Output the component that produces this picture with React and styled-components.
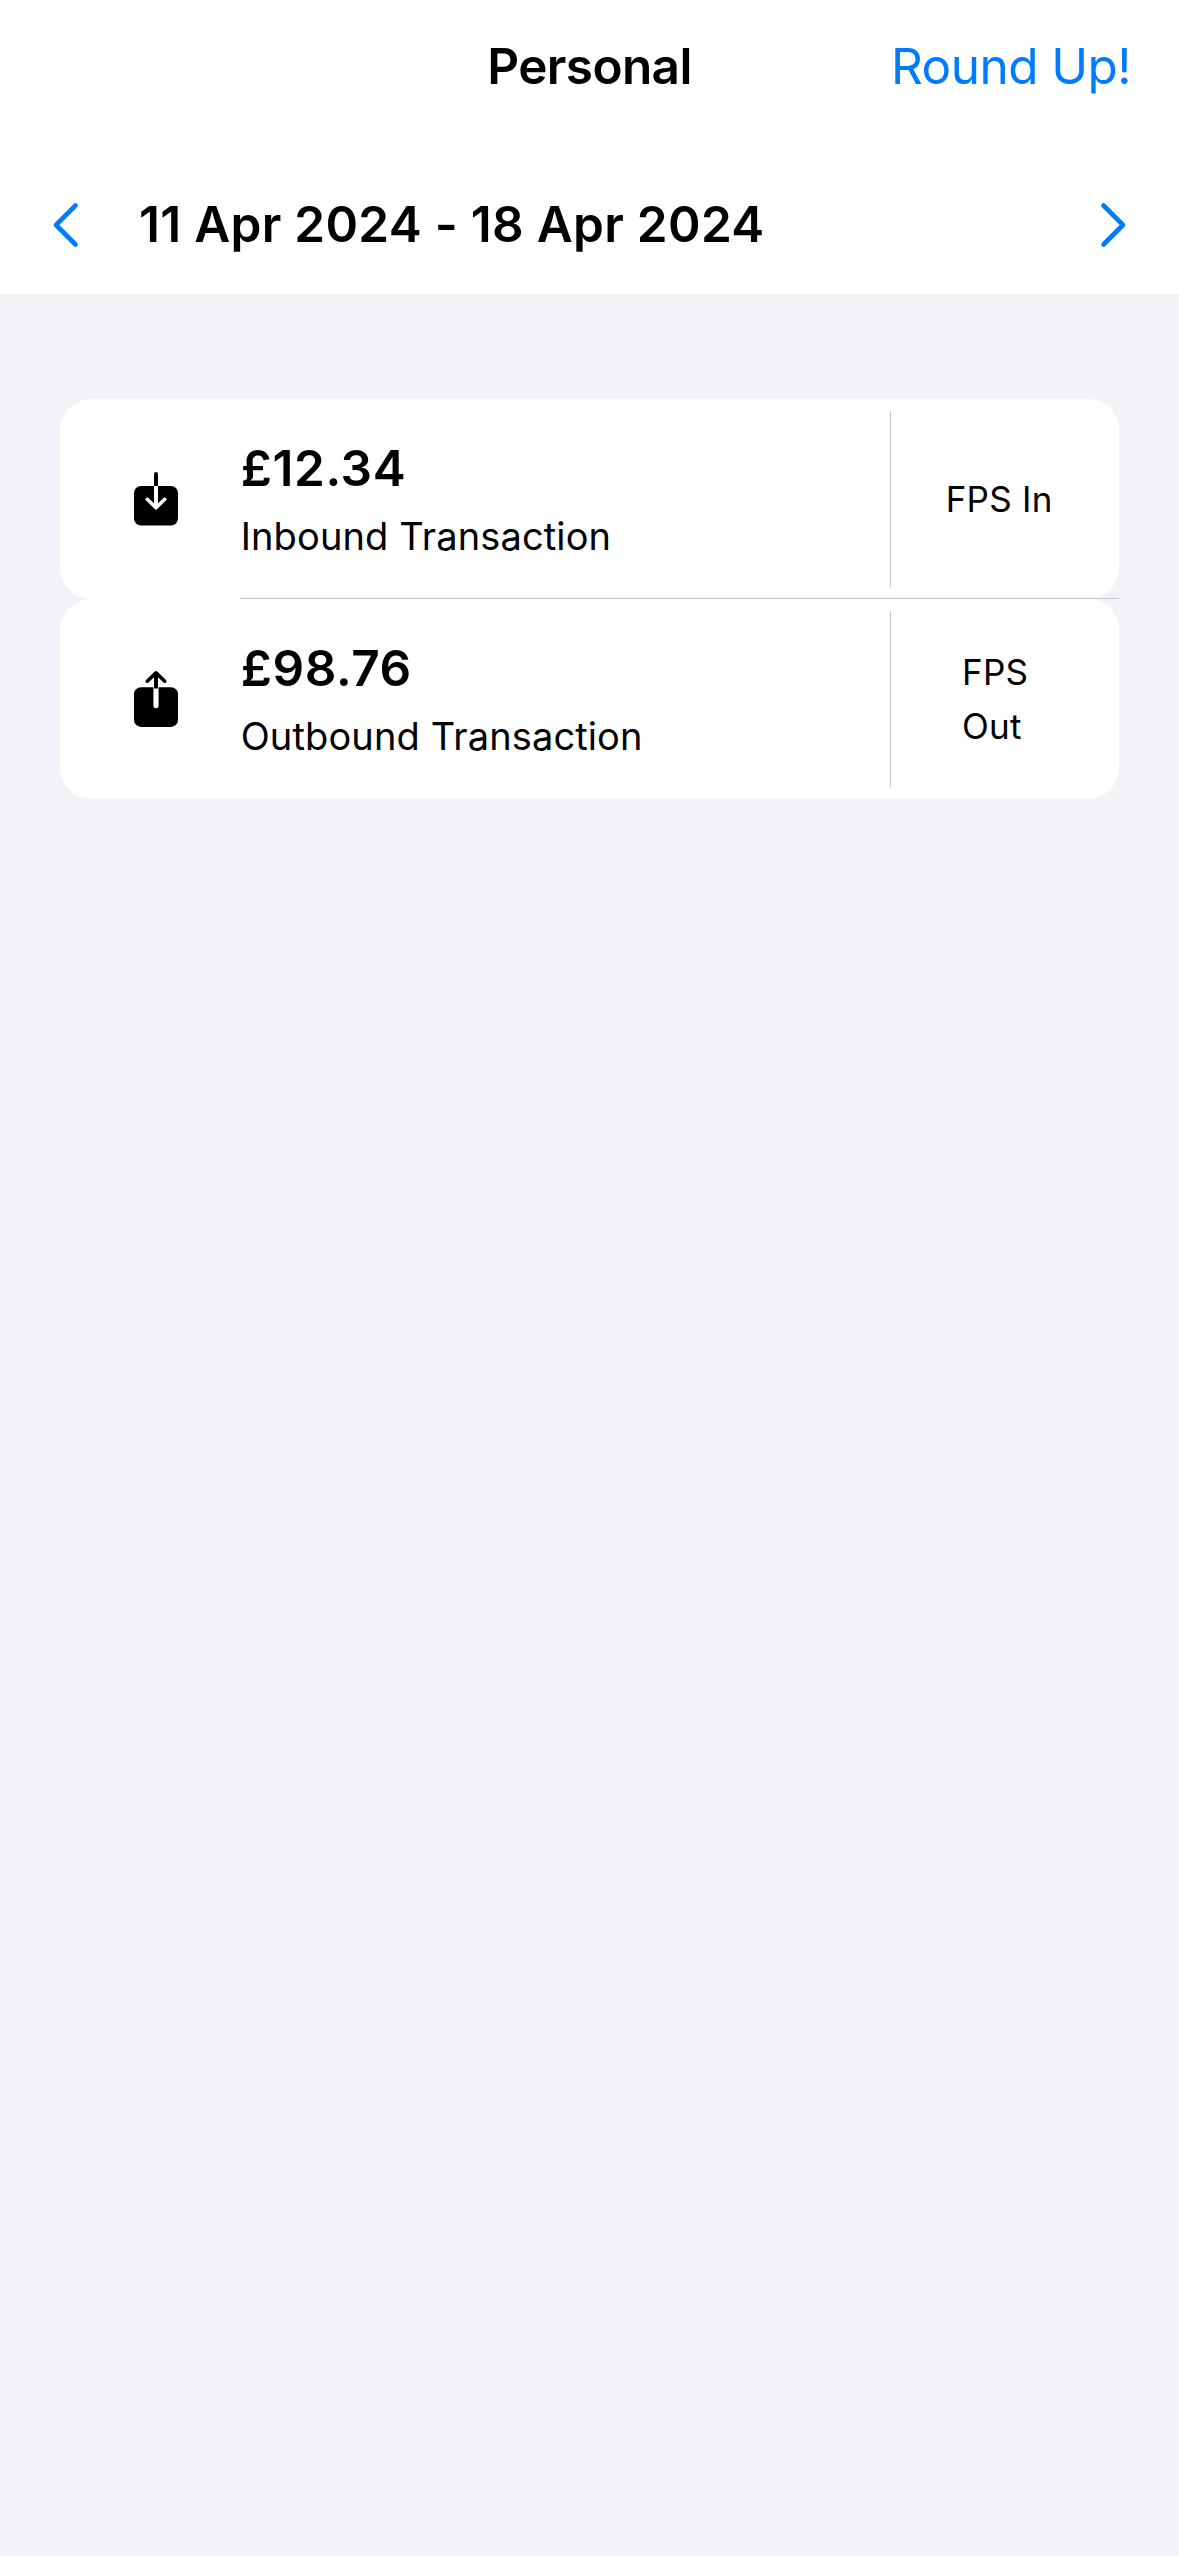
import React from "react";
import styled, { createGlobalStyle } from "styled-components";

const GlobalStyle = createGlobalStyle`
  *, *::before, *::after { box-sizing: border-box; }
  html, body { margin: 0; background: #f2f2f7; }
  body {
    font-family: Inter, "Liberation Sans", sans-serif;
    color: #000;
    font-kerning: normal;
  }
`;

const Screen = styled.div`
  width: 1179px;
  min-height: 2556px;
  display: flex;
  flex-direction: column;
  background: #f2f2f7;
`;

const Header = styled.header`
  height: 294px;
  background: #fff;
  display: flex;
  flex-direction: column;
`;

const NavBar = styled.div`
  height: 132px;
  padding: 0 48px;
  display: grid;
  grid-template-columns: 1fr auto 1fr;
  align-items: center;
`;

const Title = styled.h1`
  grid-column: 2;
  margin: 0;
  font-size: 49.5px;
  line-height: 60px;
  font-weight: 600;
  letter-spacing: -0.62px;
  white-space: nowrap;
`;

const NavAction = styled.button`
  justify-self: end;
  padding: 0;
  border: 0;
  background: none;
  font: 400 49.5px/60px Inter, "Liberation Sans", sans-serif;
  letter-spacing: -0.55px;
  color: #007aff;
  white-space: nowrap;
`;

const DateBar = styled.div`
  height: 162px;
  padding: 24px 50px 0;
  display: flex;
  align-items: center;
`;

const DateRange = styled.div`
  flex: 1;
  padding: 0 0 2px 59px;
  font-size: 49.5px;
  line-height: 60px;
  font-weight: 600;
  letter-spacing: 0.28px;
  white-space: nowrap;
`;

const ArrowButton = styled.button`
  display: flex;
  padding: 0;
  border: 0;
  background: none;
  color: #007aff;
`;

const List = styled.ul`
  list-style: none;
  margin: 105px 60px 0;
  padding: 0;
`;

const Row = styled.li`
  position: relative;
  height: 200px;
  display: grid;
  grid-template-columns: 180px 1fr 229px;
  background: #fff;
  border-radius: 31px;

  &:not(:last-child)::after {
    content: "";
    position: absolute;
    left: 180px;
    right: 0;
    bottom: 0;
    height: 1px;
    background: #c6c6c8;
  }
`;

const IconCell = styled.div`
  display: flex;
  align-items: center;
  justify-content: center;
  padding-left: 12px;
`;

const Details = styled.div`
  display: flex;
  flex-direction: column;
  padding: 39px 0 0 0.7px;
`;

const Amount = styled.div`
  font-size: 49.5px;
  line-height: 60px;
  font-weight: 600;
  letter-spacing: 0.6px;
`;

const Kind = styled.div`
  margin-top: 15px;
  font-size: 38px;
  line-height: 46px;
  letter-spacing: 0.13px;
`;

const Source = styled.div`
  margin: 12px 0;
  padding-left: ${(p) => p.$inset}px;
  border-left: 1px solid #c6c6c8;
  display: flex;
  align-items: center;
  font-size: 35px;
  line-height: 54px;
  letter-spacing: 0.25px;
`;

const SourceText = styled.span`
  width: ${(p) => (p.$wrap ? "80px" : "auto")};
  white-space: ${(p) => (p.$wrap ? "normal" : "nowrap")};
`;

function Chevron({ direction }) {
  const d = direction === "left" ? "M25.5 4.5 6 24 25.5 43.5" : "M4.5 4.5 24 24 4.5 43.5";
  return (
    <svg width="30" height="48" viewBox="0 0 30 48" fill="none" stroke="currentColor"
      strokeWidth="4.6" strokeLinecap="round" strokeLinejoin="round">
      <path d={d} />
    </svg>
  );
}

function InboundIcon() {
  return (
    <svg width="48" height="60" viewBox="0 0 48 60" fill="none" strokeLinecap="round" strokeLinejoin="round">
      <rect x="2" y="17" width="44" height="39.6" rx="7" fill="#000" />
      <path d="M24 5v12" stroke="#000" strokeWidth="4" />
      <path d="M24 17v21.5" stroke="#fff" strokeWidth="4" strokeLinecap="butt" />
      <path d="M15.3 30.3 24 38.8 32.7 30.3" stroke="#fff" strokeWidth="3.6" />
    </svg>
  );
}

function OutboundIcon() {
  return (
    <svg width="48" height="60" viewBox="0 0 48 60" fill="none" strokeLinecap="round" strokeLinejoin="round">
      <rect x="2" y="18.3" width="44" height="39.6" rx="7" fill="#000" />
      <path d="M24 18.3v18.3" stroke="#fff" strokeWidth="5.2" />
      <path d="M24 4v15.5" stroke="#000" strokeWidth="4" strokeLinecap="butt" />
      <path d="M15.3 12.2 24 3.8 32.7 12.2" stroke="#000" strokeWidth="3.6" />
    </svg>
  );
}

const transactions = [
  { amount: "£12.34", kind: "Inbound Transaction", source: "FPS In", Icon: InboundIcon, inset: 54.7 },
  { amount: "£98.76", kind: "Outbound Transaction", source: "FPS Out", Icon: OutboundIcon, inset: 71, wrap: true },
];

export default function App() {
  return (
    <>
      <GlobalStyle />
      <Screen>
        <Header>
          <NavBar>
            <Title>Personal</Title>
            <NavAction>Round Up!</NavAction>
          </NavBar>
          <DateBar>
            <ArrowButton aria-label="Previous week"><Chevron direction="left" /></ArrowButton>
            <DateRange>11 Apr 2024 - 18 Apr 2024</DateRange>
            <ArrowButton aria-label="Next week"><Chevron direction="right" /></ArrowButton>
          </DateBar>
        </Header>
        <List>
          {transactions.map(({ amount, kind, source, Icon, inset, wrap }) => (
            <Row key={amount}>
              <IconCell><Icon /></IconCell>
              <Details>
                <Amount>{amount}</Amount>
                <Kind>{kind}</Kind>
              </Details>
              <Source $inset={inset}>
                <SourceText $wrap={wrap}>{source}</SourceText>
              </Source>
            </Row>
          ))}
        </List>
      </Screen>
    </>
  );
}
